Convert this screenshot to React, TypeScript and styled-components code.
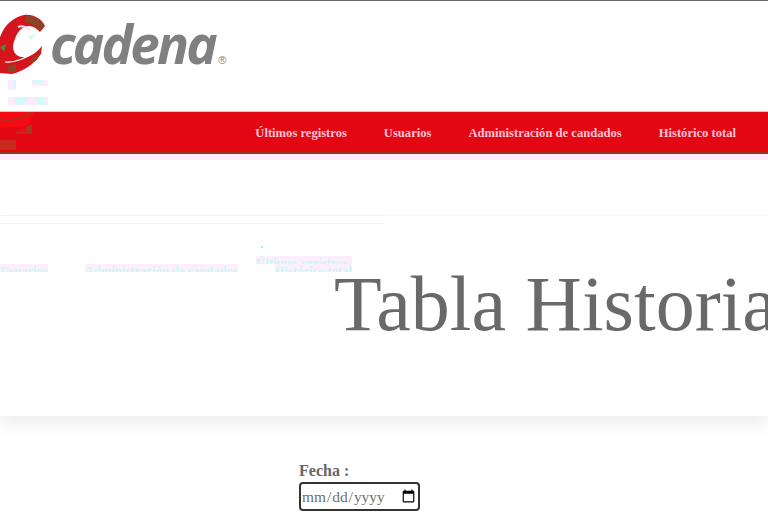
import React from "react";
import styled, { createGlobalStyle } from "styled-components";

const Global = createGlobalStyle`
  html, body { margin: 0; padding: 0; background: #fff; overflow: hidden; height: 530px; }
  body { font-family: "Liberation Serif", serif; color: #666; }
  * { box-sizing: border-box; }
`;
const Page = styled.div`
  width: 768px; height: 530px; overflow: hidden;
  border-top: 1px solid #666;
`;
const Header = styled.header`
  height: 110px; display: flex; flex-direction: column; padding: 13px 0 0 0;
`;
const Logo = styled.div`
  display: flex; align-items: flex-start; height: 62px;
`;
const LogoMark = styled.svg`
  width: 46px; height: 62px; flex: none;
`;
const LogoWord = styled.span`
  font-family: "Open Sans", "Liberation Sans", sans-serif;
  font-style: italic; font-weight: 700; font-size: 53px; line-height: 62px;
  letter-spacing: -2.75px; color: #808080; margin-left: 4px; margin-top: -1px;
`;
const Registered = styled.span`
  font-family: "Liberation Sans", sans-serif; font-size: 11px; line-height: 13px;
  color: #808080; margin: 40px 0 0 3px;
`;
const Residue = styled.svg`
  width: 60px; height: 34px; margin-top: 1px; flex: none;
`;
const Nav = styled.nav`
  height: 43px; background: #e30613; border-top: 1px solid #d9c9a8; border-bottom: 2px solid #8a3a1a;
  display: flex; align-items: center; justify-content: flex-end; padding: 3px 32px 0 0; gap: 37px;
  position: relative; overflow: hidden;
`;
const NavLink = styled.a`
  font-weight: 700; font-size: 12.6px; color: #ffc4d4; text-decoration: none; white-space: nowrap;
`;
const NavMark = styled.svg`
  position: absolute; left: 0; top: 0; width: 44px; height: 40px;
`;
const Tint = styled.div`
  height: 6px; background: #fceaff;
`;
const Gap = styled.div`
  height: 55px; background: #fff;
`;
const Hero = styled.section`
  height: 201px; position: relative; border-top: 1px solid #f4fbfb;
  box-shadow: 0 8px 16px rgba(0,0,0,.07);
  display: flex; align-items: center; padding: 0 0 25px 334px; background: #fff;
`;
const Title = styled.h1`
  margin: 0; font-weight: 400; font-size: 78px; line-height: 92px; white-space: nowrap; color: #696969;
`;
/* Faint rendering residue that lies over the hero's left part */
const GhostLayer = styled.div`
  position: absolute; left: 0; top: -1px; width: 384px; border-top: 1px solid #fdeafc;
`;
const GhostBand = styled.div`
  height: 8px; border-bottom: 1px solid #fdeafc;
`;
const GhostRow = styled.div`
  display: flex; align-items: flex-end; gap: 37px; padding-top: 22px;
`;
const Ghost = styled.span`
  font-weight: 700; font-size: 12.6px; line-height: 15px; height: 8px; overflow: hidden; white-space: nowrap;
  color: #c4fbfb; background: #fdeefc;
`;
const GhostColumn = styled.div`
  display: flex; flex-direction: column; width: 96px; margin-left: -19px;
`;
const GhostEnd = styled(Ghost)`
  align-self: flex-end;
`;
const Speck = styled.i`
  width: 2px; height: 2px; background: #8ff4f4; margin: 0 0 8px 5px;
`;
const Form = styled.form`
  display: flex; flex-direction: column; align-items: flex-start; padding: 45px 0 0 299px; gap: 2px;
`;
const Label = styled.label`
  font-weight: 700; font-size: 16px; line-height: 19px; color: #666;
`;
const DateInput = styled.input`
  width: 121px; height: 29px; padding: 0; border: 2px solid #333; border-radius: 4px;
  font-family: "Liberation Serif", serif; font-size: 15.4px; color: #707070; background: #fff; outline: none;
`;

export default function App() {
  return (
    <Page>
      <Global />
      <Header>
        <Logo>
          <LogoMark viewBox="0 14 46 62">
            <path d="M0 50 L0 37 C5 24 14 17 24 15 C33 14 41 18 45 26 L40 32 C36 28 33 26 28 26 C20 27 15 35 13 46 C13 54 18 58 26 57 C32 56 38 51 42 46 L41 54 C34 64 24 71 12 74 L0 73 Z" fill="#d4161c" />
            <path d="M26 16 C33 15 40 19 44 26 L40 31 C36 26 31 24 25 22 Z" fill="#8c4326" />
            <path d="M0 47 L6 44 L4 52 Z" fill="#4f8a3c" />
            <path d="M28 36 L38 33 L30 41 Z" fill="#d8fbf6" />
            <path d="M18 27 C22 25 26 27 30 30" stroke="#fbd9f7" strokeWidth="2" fill="none" />
            <path d="M5 62 C16 63 26 58 35 52" stroke="#ffffff" strokeWidth="1.2" fill="none" />
            <path d="M27 62 L41 52 L36 61 Z" fill="#a53a20" />
            <path d="M8 66 L16 64 L16 72 L8 72 Z" fill="#8c4326" />
          </LogoMark>
          <LogoWord>cadena</LogoWord>
          <Registered>®</Registered>
        </Logo>
        <Residue viewBox="0 0 60 34">
          <path d="M8 3 H16 V13 H8 Z M32 3 H48 V9 H32 Z" fill="#fdeafc" />
          <path d="M13 3 H16 V11 H13 Z M33 3 H44 V7 H33 Z" fill="#d2fbfb" />
          <path d="M8 20 H48 V28 H8 Z" fill="#fdeafc" />
          <path d="M13 20 L18 28 H22 L30 20 Z M34 20 L40 28 H46 L46 20 Z" fill="#d2fbfb" />
        </Residue>
      </Header>
      <Nav>
        <NavMark viewBox="0 0 44 40">
          <path d="M0 0 H34 L28 14 L0 16 Z" fill="#f50a14" />
          <path d="M0 7 C12 10 24 6 32 0" stroke="#8d3f26" strokeWidth="1.5" fill="none" />
          <path d="M16 20 L32 12 L32 22 L16 22 Z" fill="#a53a20" />
          <path d="M16 20 L26 15 L26 21 Z" fill="#f50a14" />
          <path d="M0 28 H16 V38 H0 Z" fill="#c92a20" />
        </NavMark>
        <NavLink href="#">Últimos registros</NavLink>
        <NavLink href="#">Usuarios</NavLink>
        <NavLink href="#">Administración de candados</NavLink>
        <NavLink href="#">Histórico total</NavLink>
      </Nav>
      <Tint />
      <Gap />
      <Hero>
        <GhostLayer>
          <GhostBand />
          <GhostRow>
            <Ghost>Usuarios</Ghost>
            <Ghost>Administración de candados</Ghost>
            <GhostColumn>
              <Speck />
              <Ghost>Últimos registros</Ghost>
              <GhostEnd>Histórico total</GhostEnd>
            </GhostColumn>
          </GhostRow>
        </GhostLayer>
        <Title>Tabla Historial</Title>
      </Hero>
      <Form>
        <Label htmlFor="fecha">Fecha :</Label>
        <DateInput id="fecha" type="date" />
      </Form>
    </Page>
  );
}
